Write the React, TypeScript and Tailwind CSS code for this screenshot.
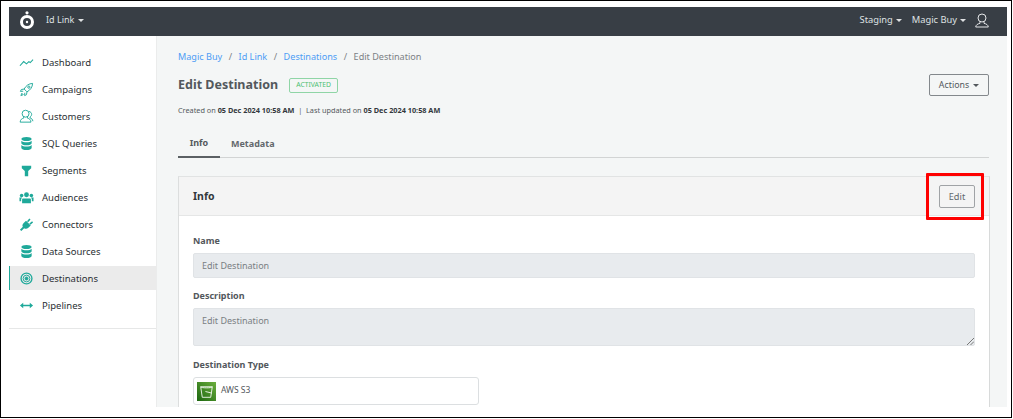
import React from "react";

const TEAL = "#1fa99a";
const Caret = ({ className = "" }: { className?: string }) => (
  <span className={"inline-block w-0 h-0 border-x-[3px] border-x-transparent border-t-[3px] ml-[3px] align-middle " + className} />
);

const ic = { width: 15, height: 15, viewBox: "0 0 16 16", fill: "none" } as const;
const Db = () => (
  <svg {...ic} fill={TEAL}>
    <path d="M2.500 3.200C2.500 1.900 5 1 8 1s5.500.9 5.500 2.200S11 5.400 8 5.400 2.500 4.500 2.500 3.200z" />
    <path d="M2.500 5c1 1.200 3.300 1.700 5.500 1.700S12.500 6.200 13.500 5v2.600C13.500 8.900 11 9.800 8 9.800S2.500 8.900 2.500 7.600z" />
    <path d="M2.500 9.500c1 1.200 3.300 1.700 5.500 1.700s4.500-.5 5.500-1.700v3.200C13.500 14 11 15 8 15s-5.500-1-5.500-2.300z" />
  </svg>
);
const icons: Record<string, React.ReactNode> = {
  Dashboard: (
    <svg {...ic} stroke={TEAL} strokeWidth="1.100">
      <path d="M1 11.500 5 7l3 2.500L10.500 7l1.500 1 3-3" />
    </svg>
  ),
  Campaigns: (
    <svg {...ic} stroke={TEAL} strokeWidth="1">
      <path d="M14.500 1.500c-4 .2-7 2.200-9 6l3 3c3.800-2 5.800-5 6-9z" />
      <path d="M5.500 7.500 2.500 8l-1 2 3-.2M8.500 10.500 8 13.500l-2 1 .2-3M2 14.500l2.500-1-1.500-1.500z" />
      <circle cx="10.500" cy="5.500" r="1.200" />
    </svg>
  ),
  Customers: (
    <svg {...ic} stroke={TEAL} strokeWidth="1">
      <circle cx="7" cy="5" r="3.700" />
      <path d="M5 8.500v1.200c-2 .6-3.500 1.400-3.800 4.300h11.600c-.3-2.900-1.800-3.700-3.800-4.300V8.500" />
      <path d="M10.500 2.500c2 .5 3 1.800 3 3.200 0 1-.6 2-1.700 2.800v1c1.500.5 2.700 1.300 3 3.500" />
    </svg>
  ),
  "SQL Queries": <Db />,
  Segments: (
    <svg {...ic} fill={TEAL}>
      <path d="M3 3h10v2.500L9.800 8.500V14H6.200V8.500L3 5.500z" />
    </svg>
  ),
  Audiences: (
    <svg {...ic} fill={TEAL}>
      <circle cx="8" cy="5" r="2.600" />
      <circle cx="2.800" cy="5.800" r="1.900" />
      <circle cx="13.200" cy="5.800" r="1.900" />
      <path d="M4.500 9h7c.8 0 1.200.5 1.200 1.200V14H3.300v-3.800C3.300 9.500 3.700 9 4.500 9zM.5 8h2.800L2.300 9.500V12H.5zM15.500 8h-2.800l1 1.500V12h1.800z" />
    </svg>
  ),
  Connectors: (
    <svg {...ic} fill={TEAL}>
      <path d="M5 6.500 7.500 4l5 5L10 11.500c-1.500 1.300-3.300 1.300-4.500.4L2.500 15 1 13.500l3.100-3C3.300 9.400 3.600 7.800 5 6.500z" />
      <path d="M8.500 4.500 11 1.500l1.300 1.200-2.500 3zM11 7l3-2.500 1 1.300-2.800 2.400z" />
    </svg>
  ),
  "Data Sources": <Db />,
  Destinations: (
    <svg {...ic} stroke={TEAL}>
      <circle cx="8" cy="8" r="5.800" strokeWidth="1.400" />
      <circle cx="8" cy="8" r="3.600" strokeWidth="1" />
      <circle cx="8" cy="8" r="1.600" fill={TEAL} />
    </svg>
  ),
  Pipelines: (
    <svg {...ic} fill={TEAL}>
      <path d="M3.500 7.200h9v1.600h-9z" />
      <path d="M4.500 5 1 8l3.500 3zM11.500 5 15 8l-3.500 3z" />
    </svg>
  ),
};

const items = ["Dashboard", "Campaigns", "Customers", "SQL Queries", "Segments", "Audiences", "Connectors", "Data Sources", "Destinations", "Pipelines"];

const Label = ({ children }: { children: React.ReactNode }) => (
  <div className="text-[9px] leading-[14px] font-bold text-[#53585c]">{children}</div>
);

export default function App() {
  return (
    <div className="relative w-[1013px] h-[419px] bg-white overflow-hidden" style={{ fontFamily: '"Noto Sans", sans-serif' }}>
      <div className="w-[1012px] h-[418px] border-[1.500px] border-black pt-[6px] pl-[8px] pr-[4px]">
        <div className="w-[998px] h-[400px] flex flex-col">
          <header className="h-[29px] shrink-0 bg-[#383e45] flex items-center text-[#dfe1e3] text-[9px] pl-[10px] pr-[18px] pb-[3px]">
            <svg width="16" height="18" viewBox="0 0 16 18" className="mr-[11px] -mt-[1px]">
              <circle cx="8" cy="11" r="5.500" fill="none" stroke="#fff" strokeWidth="3" />
              <circle cx="8" cy="11" r="1.200" fill="#fff" />
              <circle cx="8" cy="1.800" r="1.600" fill="#fff" />
            </svg>
            <span>Id Link</span>
            <Caret className="border-t-[#dfe1e3] ml-[4px]" />
            <div className="ml-auto flex items-center text-[9.300px]">
              <span>Staging</span>
              <Caret className="border-t-[#dfe1e3]" />
              <span className="ml-[10px]">Magic Buy</span>
              <Caret className="border-t-[#dfe1e3]" />
              <svg width="14" height="15" viewBox="0 0 14 15" fill="none" stroke="#e4e6e8" strokeWidth="1" className="ml-[9px]">
                <circle cx="7" cy="5" r="4" />
                <path d="M5 8.500v1.800C2.500 11 1 11.800.7 14h12.600c-.3-2.200-1.800-3-4.300-3.700V8.500" />
              </svg>
            </div>
          </header>
          <div className="flex flex-1 min-h-0">
            <aside className="w-[148px] shrink-0 bg-white border-r border-[#ebecec] pt-[14px]">
              <nav className="pb-[11px] border-b border-[#e6e7e7] flex flex-col gap-[3px]">
                {items.map((t) => (
                  <div
                    key={t}
                    className={
                      "h-[24px] flex items-center text-[9.500px] text-[#2a2f33] " +
                      (t === "Destinations" ? "bg-[#ebebeb] border-l border-[#1fa99a] pl-[9px]" : "pl-[10px]")
                    }
                  >
                    <span className="w-[23px] shrink-0 flex">{icons[t]}</span>
                    <span className="mt-[2px]">{t}</span>
                  </div>
                ))}
              </nav>
            </aside>
            <main className="flex-1 min-w-0 bg-[#f4f6f6] pt-[14px] pl-[21px] pr-[18px] overflow-hidden">
              <div className="flex items-center text-[9.100px] leading-[14px] text-[#4d9df5]">
                <span>Magic Buy</span>
                <span className="mx-[6.500px] text-[#7c8185]">/</span>
                <span>Id Link</span>
                <span className="mx-[6.500px] text-[#7c8185]">/</span>
                <span>Destinations</span>
                <span className="mx-[6.500px] text-[#7c8185]">/</span>
                <span className="text-[#7c8185]">Edit Destination</span>
              </div>
              <div className="flex items-center mt-[10px] h-[22px] relative">
                <h1 className="text-[12.500px] font-bold text-[#53585c] mt-[1px]">Edit Destination</h1>
                <span className="ml-[11px] mt-[1px] h-[15px] w-[49px] flex items-center justify-center border border-[#8fd5a6] rounded-[2px] text-[6.800px] text-[#4cc073]">ACTIVATED</span>
                <button className="ml-auto h-[22px] w-[60px] pt-[1px] bg-transparent border border-[#83888c] rounded-[2px] text-[8.800px] text-[#53585c]">
                  Actions<Caret className="border-t-[#53585c] ml-[4px]" />
                </button>
              </div>
              <div className="mt-[9px] text-[7.300px] leading-[11px] text-[#53585c]">
                Created on <b className="text-[#33383c]">05 Dec 2024 10:58 AM</b> &nbsp;|&nbsp; Last updated on <b className="text-[#33383c]">05 Dec 2024 10:58 AM</b>
              </div>
              <div className="mt-[14px] flex h-[28px] border-b border-[#d2d4d4] text-[9px] font-bold text-[#63686c]">
                <div className="w-[42px] h-[28px] border-b-[2px] border-[#5b6064] flex justify-center pt-[6px] leading-[14px] text-[#53585c]">Info</div>
                <div className="ml-[11px] pt-[7px] leading-[14px]">Metadata</div>
              </div>
              <section className="mt-[18px] -mr-[1px] h-[300px] bg-white border border-[#e1e3e3] border-l-[#dcdede] border-r-[#d8dada]">
                <div className="h-[39px] bg-[#f4f4f4] border-b border-[#e5e6e6] flex items-center pl-[14px] pr-[14px]">
                  <h2 className="text-[10.500px] font-bold text-[#33383c] mt-[1px]">Info</h2>
                  <button className="ml-auto w-[36px] h-[23px] mt-[1px] bg-transparent border border-[#a0a3a6] rounded-[2px] text-[9.200px] text-[#63686c]">Edit</button>
                </div>
                <div className="px-[14px] pt-[18px]">
                  <Label>Name</Label>
                  <div className="mt-[5px] h-[25px] w-full bg-[#e8ebee] border border-[#e0e3e6] rounded-[2px] flex items-center pl-[8px] text-[9px] text-[#7a7f83]">Edit Destination</div>
                  <div className="mt-[11px]"><Label>Description</Label></div>
                  <div className="relative mt-[5px] h-[38px] w-full bg-[#e8ebee] border border-[#e0e3e6] rounded-[2px] pl-[8px] pt-[5px] text-[9px] leading-[14px] text-[#7a7f83]">
                    Edit Destination
                    <svg width="8" height="8" viewBox="0 0 8 8" stroke="#777" strokeWidth="1" className="absolute right-0 bottom-0">
                      <path d="M1 8 8 1M4.500 8 8 4.500" />
                    </svg>
                  </div>
                  <div className="mt-[12px]"><Label>Destination Type</Label></div>
                  <div className="mt-[5px] h-[28px] w-[286px] bg-white border border-[#dcdfe1] rounded-[3px] flex items-center pl-[3px] text-[8.500px] text-[#53585c]">
                    <svg width="19" height="19" viewBox="0 0 18 18" className="shrink-0 mr-[5px]">
                      <defs>
                        <linearGradient id="s3" x1="0" y1="1" x2="1" y2="0">
                          <stop offset="0" stopColor="#1b660f" />
                          <stop offset="1" stopColor="#6cae3e" />
                        </linearGradient>
                      </defs>
                      <rect width="18" height="18" fill="url(#s3)" />
                      <path d="M3.500 4.500h11L13 14.500H5zM3.500 4.500c0 1.400 11 1.400 11 0M8 9l6 1.500" fill="none" stroke="#fff" strokeWidth=".8" />
                    </svg>
                    <span className="-mt-[2px]">AWS S3</span>
                  </div>
                </div>
              </section>
            </main>
          </div>
        </div>
      </div>
      <div className="absolute left-[926px] top-[173px] w-[58px] h-[47px] border-[3px] border-[#fe0000] rounded-[1px]" />
    </div>
  );
}
